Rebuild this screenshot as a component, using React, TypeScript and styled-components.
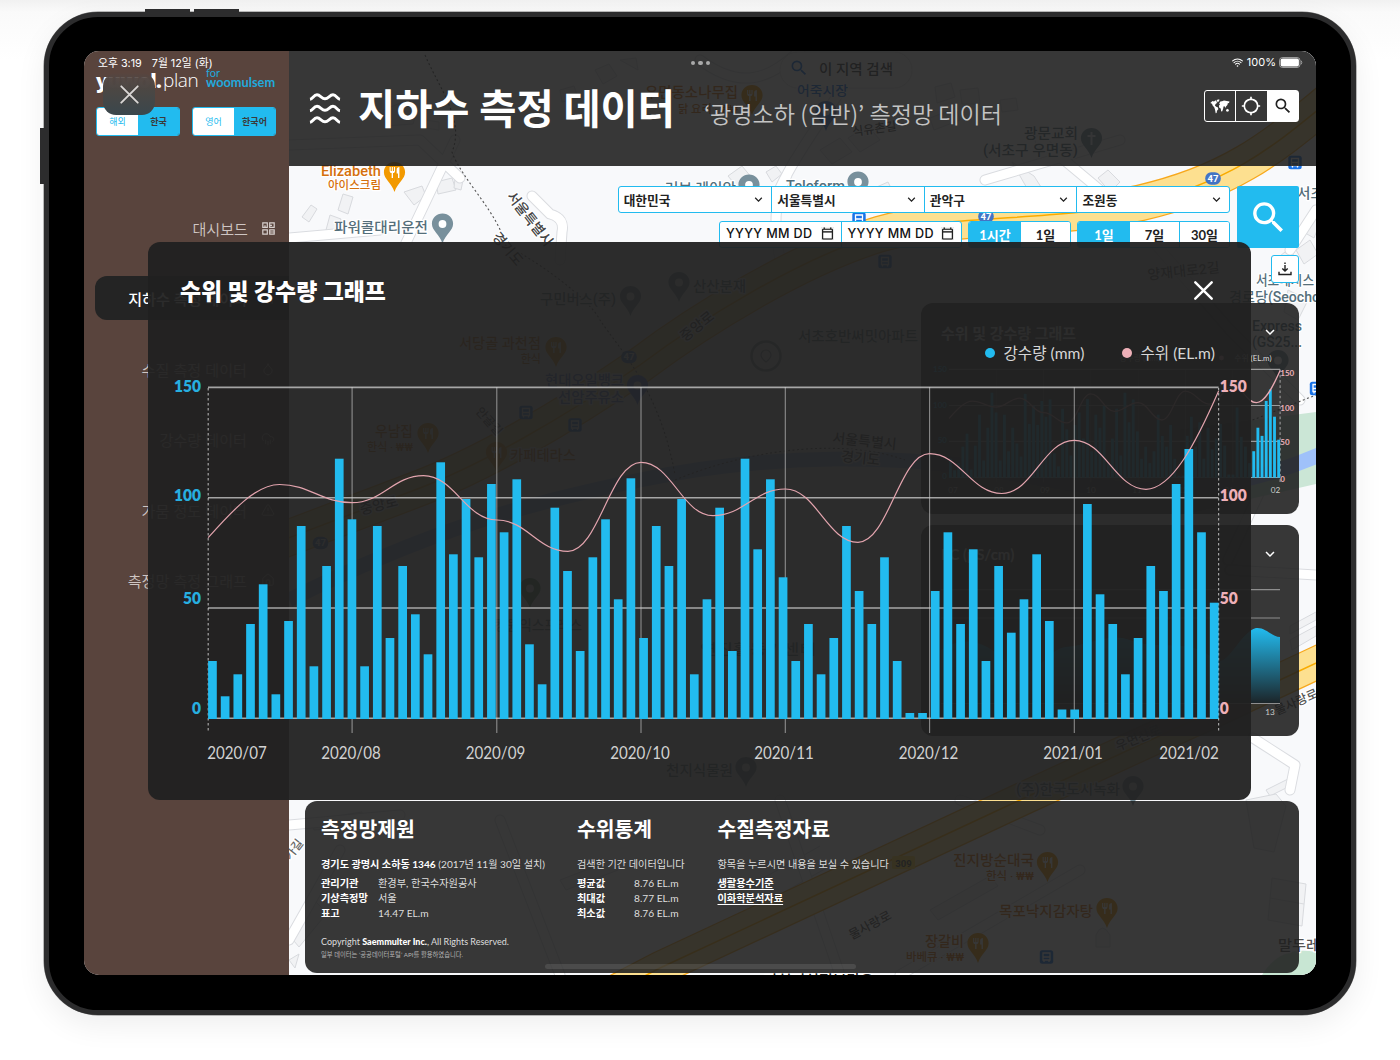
import React from "react";
import styled, { createGlobalStyle, css } from "styled-components";
import {
  MdSearch,
  MdLocationSearching,
  MdOutlineCalendarToday,
  MdKeyboardArrowDown,
  MdRestaurant,
} from "react-icons/md";
import { IoWifi } from "react-icons/io5";
import { Droplet, CloudRain, TriangleAlert, House, ChartNoAxesColumn } from "lucide-react";

const BLUE = "#22bbef";
const PINK = "#eeb0b8";
const TEXT = `"Lato", "Noto Sans CJK KR", sans-serif`;
const MAPFONT = `Roboto, "Noto Sans CJK KR", sans-serif`;
const GLASS = "rgba(30, 30, 30, 0.89)";

const Global = createGlobalStyle`
  *, *::before, *::after { box-sizing: border-box; }
  body { margin: 0; background: #fff; font-family: ${TEXT}; overflow: hidden; }
`;

/* ---------- device ---------- */

const Page = styled.div`
  width: 1400px;
  height: 1060px;
  padding: 12px 0 0 44px;
  background: linear-gradient(#f1f1f1, #fafafa 12px, #ffffff 60px);
`;

const Device = styled.div`
  position: relative;
  width: 1312px;
  height: 1003px;
  padding: 34px 35px;
  background: #000;
  border: 5px solid #2c2c2d;
  border-radius: 54px;
  box-shadow: 0 0 0 0.5px #777, 0 10px 30px rgba(0, 0, 0, 0.07);
`;

const SideKey = styled.div<{ $x: number; $y: number; $w: number; $h: number }>`
  position: absolute;
  left: ${(p) => p.$x}px;
  top: ${(p) => p.$y}px;
  width: ${(p) => p.$w}px;
  height: ${(p) => p.$h}px;
  background: #2c2c2d;
`;

const Screen = styled.div`
  position: relative;
  display: flex;
  width: 1232px;
  height: 924px;
  overflow: hidden;
  border-radius: 15px;
  background: #f8f9fb;
`;

/* ---------- status bar ---------- */

const StatusBar = styled.div`
  position: absolute;
  z-index: 5;
  inset: 0 0 auto 0;
  height: 23px;
  padding: 0 13px 0 14px;
  display: flex;
  align-items: center;
  justify-content: space-between;
  color: #fff;
  font: 400 11px/23px Inter, "Noto Sans CJK KR", sans-serif;
`;

const StatusLeft = styled.div`
  display: flex;
  gap: 10px;
  font-size: 10.8px;
  padding-top: 1px;
`;

const StatusRight = styled.div`
  display: flex;
  align-items: center;
  gap: 3px;
  svg { display: block; }
`;

const Dots = styled.div`
  position: absolute;
  z-index: 5;
  left: 607px;
  top: 10px;
  display: flex;
  gap: 3px;
  i { width: 4.4px; height: 4.4px; border-radius: 50%; background: #a9a9a9; }
`;

const CloseBubble = styled.button`
  position: absolute;
  z-index: 4;
  left: 19px;
  top: 22px;
  width: 52px;
  height: 42px;
  display: grid;
  place-items: center;
  padding: 0;
  border: 0;
  border-radius: 13px;
  background: linear-gradient(rgba(86, 70, 65, 0.2), rgba(82, 70, 66, 0.98) 5px, #4a4744 45%, #3a474d);
`;

const HomeBar = styled.div`
  position: absolute;
  z-index: 4;
  left: 461px;
  top: 913px;
  width: 311px;
  height: 5px;
  border-radius: 3px;
  background: rgba(255, 255, 255, 0.1);
`;

/* ---------- sidebar ---------- */

const Sidebar = styled.aside`
  position: relative;
  width: 205px;
  flex: none;
  padding: 17px 0 0 12px;
  background: #59443d;
`;

const Logo = styled.div`
  display: flex;
  align-items: flex-start;
  height: 39px;
  color: #fff;
  font-family: "Open Sans", sans-serif;
  line-height: 25px;
`;
const LogoBold = styled.span`
  width: 67px;
  font-size: 20px;
  font-weight: 800;
  letter-spacing: -0.6px;
`;
const LogoThin = styled.span`
  width: 43px;
  font-size: 19px;
  font-weight: 300;
  letter-spacing: -0.4px;
`;
const LogoTag = styled.span`
  display: flex;
  flex-direction: column;
  color: #22a9dc;
  font: 700 12.8px/11px Lato, sans-serif;
  small { font-size: 11px; font-weight: 400; line-height: 9px; }
`;

const ToggleRow = styled.div`
  display: flex;
  gap: 12px;
`;

const Toggle = styled.div`
  display: flex;
  width: 84px;
  height: 29px;
  border: 1.5px solid ${BLUE};
  border-radius: 3px;
  overflow: hidden;
`;

const ToggleItem = styled.span<{ $on?: boolean }>`
  flex: 1;
  text-align: center;
  font-size: 9px;
  line-height: 27px;
  ${(p) =>
    p.$on
      ? css`background: ${BLUE}; color: #3b3a3a; font-weight: 700;`
      : css`background: #fff; color: ${BLUE};`}
`;

const Menu = styled.nav`
  display: flex;
  flex-direction: column;
  gap: 26.4px;
  margin-top: 70px;
`;

const MenuItem = styled.a<{ $active?: boolean }>`
  display: flex;
  align-items: center;
  justify-content: flex-end;
  gap: 14px;
  height: 44px;
  margin-left: -1px;
  padding-right: 14px;
  border-radius: 12px 0 0 12px;
  font-size: 15.1px;
  font-weight: ${(p) => (p.$active ? 500 : 350)};
  color: ${(p) => (p.$active ? "#fff" : "#cfc6c3")};
  background: ${(p) => (p.$active ? "#242424" : "transparent")};
`;

/* ---------- main column ---------- */

const Main = styled.main`
  position: relative;
  flex: 1;
  display: flex;
  flex-direction: column;
  min-width: 0;
`;

const MapLayer = styled.svg`
  position: absolute;
  left: 0;
  top: 0;
  width: 1027px;
  height: 924px;
  font-family: ${MAPFONT};
`;

const Header = styled.header`
  position: relative;
  height: 115px;
  flex: none;
  display: flex;
  align-items: center;
  padding: 0 17px 0 20px;
  background: ${GLASS};
`;

const Title = styled.h1`
  margin: 0 29px 0 17px;
  color: #fff;
  font: 700 40.4px/60px ${TEXT};
  white-space: nowrap;
`;

const Subtitle = styled.div`
  flex: 1;
  margin-top: 8px;
  color: #c4c4c4;
  font: 350 23.1px/32px "Noto Sans CJK KR", sans-serif;
  white-space: nowrap;
`;

const IconGroup = styled.div`
  display: flex;
  width: 95px;
  height: 32px;
  margin-top: -5px;
  border: 1.5px solid #fff;
  border-radius: 3px;
`;

const IconButton = styled.button<{ $on?: boolean }>`
  flex: 1;
  display: grid;
  place-items: center;
  padding: 0;
  border: 0;
  border-right: 1.5px solid #fff;
  background: ${(p) => (p.$on ? "#fff" : "transparent")};
  color: ${(p) => (p.$on ? "#222" : "#fff")};
  &:last-child { border-right: 0; }
`;

const Toolbar = styled.div`
  position: relative;
  display: flex;
  justify-content: flex-end;
  gap: 7px;
  height: 62px;
  margin: 20px 17px 0;
`;

const Filters = styled.div`
  display: flex;
  flex-direction: column;
  align-items: flex-end;
  gap: 7.5px;
`;

const FilterRow = styled.div`
  display: flex;
  gap: 6px;
`;

const Segment = styled.div`
  display: flex;
  height: 27.5px;
  border: 1.3px solid ${BLUE};
  border-radius: 3px;
  overflow: hidden;
  background: #fff;
`;

const Select = styled.div`
  width: 152.6px;
  padding: 0 5px;
  display: flex;
  align-items: center;
  justify-content: space-between;
  color: #222;
  font-size: 12.7px;
  font-weight: 700;
  & + & { border-left: 1.3px solid ${BLUE}; }
`;

const DateField = styled.div`
  width: 120.5px;
  padding: 0 7px 0 6px;
  display: flex;
  align-items: center;
  justify-content: space-between;
  color: #111;
  font: 500 12.6px/26px Inter, sans-serif;
  letter-spacing: 0.35px;
  white-space: nowrap;
  svg { flex: none; stroke: #111; stroke-width: 0.2px; margin-top: -2px; }
  & + & { border-left: 1.3px solid ${BLUE}; }
`;

const Option = styled.div<{ $on?: boolean; $w: number }>`
  width: ${(p) => p.$w}px;
  text-align: center;
  font-size: 13px;
  font-weight: 700;
  line-height: 26px;
  color: ${(p) => (p.$on ? "#fff" : "#222")};
  background: ${(p) => (p.$on ? BLUE : "#fff")};
  & + & + & { border-left: 1.3px solid ${BLUE}; }
`;

const SearchButton = styled.button`
  width: 62px;
  height: 62px;
  display: grid;
  place-items: center;
  padding: 0;
  border: 0;
  border-radius: 2px;
  background: ${BLUE};
  color: #fff;
`;

const DownloadButton = styled.button`
  position: relative;
  align-self: flex-end;
  width: 28px;
  height: 28px;
  margin: 7px 17px 20px 0;
  display: grid;
  place-items: center;
  padding: 0;
  border: 1.3px solid ${BLUE};
  border-radius: 3px;
  background: #fff;
`;

const SideCards = styled.div`
  position: relative;
  align-self: flex-end;
  width: 378px;
  margin-right: 17px;
  display: flex;
  flex-direction: column;
  gap: 11px;
`;

const Card = styled.section`
  height: 211px;
  border-radius: 12px;
  background: ${GLASS};
`;

const CardHead = styled.div`
  display: flex;
  align-items: center;
  justify-content: space-between;
  height: 44px;
  margin-top: 7px;
  padding: 0 20px;
  color: #fff;
  font-size: 15px;
  font-weight: 700;
`;

const CardPlot = styled.svg`
  display: block;
  width: 378px;
  height: 160px;
  font-family: ${TEXT};
`;

const InfoCard = styled.section`
  position: relative;
  height: 172px;
  margin: 65px 17px 0 16px;
  padding: 16px 16px 0;
  border-radius: 12px;
  background: ${GLASS};
  color: #dedede;
  display: grid;
  grid-template-columns: 256px 140.5px auto;
`;

const InfoTitle = styled.h2`
  margin: 0 0 14.5px;
  color: #fff;
  font: 700 20.4px/24px ${TEXT};
`;

const InfoLead = styled.p`
  margin: 0 0 4px;
  font-size: 10.15px;
  line-height: 16px;
  white-space: nowrap;
  b { color: #fff; }
`;

const InfoList = styled.dl`
  margin: 0;
  display: grid;
  grid-template-columns: 57px auto;
  font-size: 10.2px;
  line-height: 15.4px;
  dt { font-weight: 700; color: #fff; }
  dd { margin: 0; white-space: nowrap; }
`;

const InfoLink = styled.a`
  display: block;
  margin-top: 1px;
  color: #fff;
  font-size: 10.2px;
  font-weight: 700;
  line-height: 14.4px;
  text-decoration: underline;
  text-underline-offset: 2px;
`;

const Copyright = styled.p`
  margin: 14px 0 1px;
  font-size: 9px;
  line-height: 12px;
  white-space: nowrap;
  b { color: #fff; font-weight: 900; }
`;

const Footnote = styled.p`
  margin: 0;
  color: #b4b4b4;
  font-size: 6.3px;
  line-height: 11px;
  white-space: nowrap;
`;

/* ---------- modal ---------- */

const Modal = styled.div`
  position: absolute;
  z-index: 3;
  left: 64px;
  top: 191px;
  width: 1103px;
  height: 558px;
  border-radius: 12px;
  background: rgba(33, 33, 33, 0.95);
`;

const ModalHead = styled.div`
  display: flex;
  align-items: center;
  justify-content: space-between;
  height: 36px;
  margin: 31px 38.5px 0 32px;
  color: #fff;
  font: 900 22.9px/36px ${TEXT};
  svg { margin-top: -2px; }
`;

const Legend = styled.div`
  display: flex;
  justify-content: flex-end;
  gap: 38px;
  height: 24px;
  margin: 32px 36px 0 0;
  color: #d6d6d6;
  font-size: 15.6px;
  line-height: 24px;
`;

const LegendItem = styled.span<{ $color: string }>`
  display: flex;
  align-items: center;
  gap: 8px;
  &::before {
    content: "";
    width: 10px;
    height: 10px;
    border-radius: 50%;
    background: ${(p) => p.$color};
  }
`;

const ModalPlot = styled.svg`
  display: block;
  width: 1103px;
  height: 420px;
  margin-top: 4px;
  font-family: ${TEXT};
`;

/* ---------- chart data ---------- */

const barTops = [
  661, 696.3, 674.3, 624, 584.3, 694.3, 621, 526, 666.3, 566, 458.7, 519.3, 666.3, 526, 638, 566,
  614.3, 654.3, 462.3, 554.3, 499, 557.3, 484, 532.3, 479.3, 644.3, 684.3, 507.7, 571, 651, 557.3,
  519.3, 599.3, 478.3, 638, 526, 566, 499, 674.3, 599.3, 507.7, 651, 458.7, 549.3, 479.3, 577.3,
  661, 624, 674.3, 638, 526, 591, 624, 557.3, 661, 713, 713, 591, 532.3, 624, 549.3, 661, 566,
  632.7, 599.3, 554.3, 621, 709.5, 709.5, 504, 594.3, 624, 674.3, 638, 566, 591, 484, 449, 532.3,
  602.7,
];

const levels: [number, number][] = [
  [208.2, 537.7], [279.5, 484.5], [352.1, 502.7], [423.5, 475.6], [496.8, 520], [568, 551.3],
  [641, 462.3], [713, 515.7], [785.3, 489], [858, 542.3], [929.6, 453.7], [1001.8, 493.5],
  [1074.3, 440.3], [1146, 489.3],
];

const levelPath = (() => {
  let d = `M${levels[0]} C232 511 256 484.5 ${levels[1]}`;
  for (let i = 2; i < levels.length; i++) {
    const [x0, y0] = levels[i - 1];
    const [x1, y1] = levels[i];
    const k = (x1 - x0) * 0.42;
    d += ` C${x0 + k} ${y0} ${x1 - k} ${y1} ${x1} ${y1}`;
  }
  return d + " C1172 489 1196 443 1218.6 391";
})();

const gridY = [387.4, 497.8, 608, 718.3];
const gridX = [352.1, 496.8, 641, 785.3, 929.6, 1074.3];

const months: [string, number][] = [
  ["2020/07", 237], ["2020/08", 351], ["2020/09", 495.5], ["2020/10", 640],
  ["2020/11", 784], ["2020/12", 928.5], ["2021/01", 1073], ["2021/02", 1189],
];

const Bars = () => (
  <g fill={BLUE}>
    {barTops.map((y, i) => (
      <rect key={i} x={208.1 + i * 12.68} y={y} width={8.7} height={719 - y} />
    ))}
  </g>
);

const MainChart = () => (
  <ModalPlot viewBox="148 369 1103 420">
    <g stroke="#d0d0d0" strokeOpacity="0.75">
      {gridX.map((x) => (
        <line key={x} x1={x} x2={x} y1={387} y2={733} strokeWidth="1.1" strokeOpacity="0.6" />
      ))}
      {gridY.map((y) => (
        <line key={y} x1={208} x2={1218.6} y1={y} y2={y} strokeWidth="1.6" />
      ))}
      {[208.2, 1218.6].map((x) => (
        <line key={x} x1={x} x2={x} y1={388} y2={733} strokeWidth="1.2" strokeDasharray="2.6 2.4" />
      ))}
    </g>
    <Bars />
    <path d={levelPath} fill="none" stroke="#e3a4ae" strokeWidth="1.2" />
    <g fontSize="16.8" fontWeight="800">
      {["150", "100", "50", "0"].map((t, i) => {
        const y = [392, 500.5, 604, 714.3][i];
        const w = t.length * 9;
        return (
          <React.Fragment key={t}>
            <text x={201} y={y} textAnchor="end" fill="#27afe0" textLength={w} lengthAdjust="spacingAndGlyphs">{t}</text>
            <text x={1219.7} y={y} fill={PINK} textLength={w} lengthAdjust="spacingAndGlyphs">{t}</text>
          </React.Fragment>
        );
      })}
    </g>
    <g fontSize="16.6" fill="#d2d2d2" textAnchor="middle">
      {months.map(([m, x]) => (
        <text key={m} x={x} y={758.5} textLength="59.5" lengthAdjust="spacingAndGlyphs">{m}</text>
      ))}
    </g>
  </ModalPlot>
);

const MiniChart = () => (
  <CardPlot viewBox="921 354 378 160">
    <g fontSize="7.8" fill="#ddd">
      <text x={1271.5} y={361} textAnchor="end">수위 (EL.m)</text>
      <text x={1160} y={361} textAnchor="end">강수량 (mm)</text>
      <circle cx={1221.5} cy={358} r="2.4" fill={PINK} />
    </g>
    <g transform="translate(949 369.4) scale(0.3277 0.3265) translate(-208.2 -387.4)">
      <g stroke="#9a9a9a" strokeWidth="3.4">
        {gridY.map((y) => (
          <line key={y} x1={208} x2={1218.6} y1={y} y2={y} />
        ))}
        {gridX.map((x) => (
          <line key={x} x1={x} x2={x} y1={387} y2={733} strokeOpacity="0.4" />
        ))}
        <line x1={1218.6} x2={1218.6} y1={388} y2={733} strokeDasharray="8 8" />
      </g>
      <Bars />
      <path d={levelPath} fill="none" stroke="#e8a9b2" strokeWidth="4" />
    </g>
    <g fontSize="8" fontWeight="700">
      {["150", "100", "50", "0"].map((t, i) => (
        <React.Fragment key={t}>
          <text x={947} y={[372, 408, 443, 479][i]} textAnchor="end" fill="#27afe0">{t}</text>
          <text x={1280.3} y={[375.5, 411.3, 445.3, 481.5][i]} fill={PINK}>{t}</text>
        </React.Fragment>
      ))}
    </g>
    <g fontSize="8.2" fill="#ccc" textAnchor="middle">
      {["07", "08", "09", "10", "11", "12", "01", "02"].map((t, i) => (
        <text key={t} x={i === 7 ? 1275.5 : 953 + i * 46} y={493}>{t}</text>
      ))}
    </g>
  </CardPlot>
);

const EcChart = () => (
  <CardPlot viewBox="921 576 378 160">
    <defs>
      <linearGradient id="ec" x1="0" y1="0" x2="0" y2="1">
        <stop offset="0" stopColor={BLUE} />
        <stop offset="1" stopColor="#1c2529" />
      </linearGradient>
    </defs>
    <path
      d="M941 650 C965 635 985 640 1010 665 C1030 690 1045 650 1065 647 C1090 645 1110 632 1130 640 C1160 652 1190 636 1215 660 C1228 668 1240 632 1256 628 C1266 627 1272 637 1280 637 V703 H941Z"
      fill="url(#ec)"
    />
    <g stroke="#8e8e8e" strokeWidth="1.1">
      {[589.6, 618, 703.5].map((y) => (
        <line key={y} x1={941} x2={1280} y1={y} y2={y} />
      ))}
    </g>
    <text x={1270} y={715} fontSize="8.2" fill="#ccc" textAnchor="middle">13</text>
  </CardPlot>
);

/* ---------- map ---------- */

type PinProps = { x: number; y: number; color?: string; kind?: "food" | "dot" | "cross" };

const Pin = ({ x, y, color = "#78909c", kind = "dot" }: PinProps) => (
  <g transform={`translate(${x} ${y})`}>
    <path
      d="M0 -11 C6 -11 10.6 -6.6 10.6 -0.8 C10.6 6 3 9.5 0 19 C-3 9.5 -10.6 6 -10.6 -0.8 C-10.6 -6.6 -6 -11 0 -11Z"
      fill={color}
    />
    {kind === "dot" && <circle r="3.9" cy="-0.5" fill="#fff" />}
    {kind === "cross" && <path d="M0 -7V6M-4 -3H4" stroke="#e8eef0" strokeWidth="2" />}
    {kind === "food" && <MdRestaurant x={-6.5} y={-7} size={13} color="#fff" />}
  </g>
);

const Label = ({
  x, y, children, color = "#546e7a", size = 13, end = false, rot = 0, w,
}: {
  x: number; y: number; children: React.ReactNode; color?: string; size?: number; end?: boolean; rot?: number; w?: number;
}) => (
  <text
    x={x}
    y={y}
    fontSize={size}
    fontWeight="500"
    fill={color}
    textAnchor={rot ? "middle" : end ? "end" : "start"}
    transform={rot ? `rotate(${rot} ${x} ${y})` : undefined}
    textLength={w}
    lengthAdjust="spacingAndGlyphs"
    stroke="#fff"
    strokeWidth="2.5"
    strokeLinejoin="round"
    paintOrder="stroke"
  >
    {children}
  </text>
);

const Bus = ({ x, y }: { x: number; y: number }) => (
  <g transform={`translate(${x} ${y})`}>
    <rect x="-6.7" y="-6.7" width="13.4" height="13.4" rx="2.5" fill="#1a73e8" />
    <path d="M-3.5 -4H3.5V3H-3.5ZM-3.5 0H3.5M-2.5 3V5M2.5 3V5" stroke="#fff" strokeWidth="1.3" fill="none" />
  </g>
);

const Shield = ({ x, y }: { x: number; y: number }) => (
  <g>
    <rect x={x - 7.8} y={y - 6.2} width="15.6" height="12.4" rx="6" fill="#4374c4" />
    <text x={x} y={y + 3.4} fontSize="9.5" fontWeight="700" fill="#fff" textAnchor="middle">47</text>
  </g>
);

const ORANGE = "#d5700c";
const AMBER = "#f29900";
const mainRoad =
  "M1340 92 C1280 140 1240 180 1140 203 C1050 222 950 214 880 234 C800 258 700 320 640 365 C560 420 480 465 420 488 L270 545";
const lowRoad = "M1340 652 L1220 708 L1020 800 L660 968 L560 1020";

const whiteRoads = [
  "M289 238 L380 230 M405 245 L455 140 M289 145 L420 140 L460 178",
  "M532 196 L550 214 Q565 218 562 232 L560 260",
  "M795 160 C770 200 775 230 780 260 M860 60 C830 110 790 160 775 200",
  "M1040 140 L1130 215 L1230 330 L1300 400 M1290 250 L1316 210",
  "M1228 560 L1270 470 L1316 455 M1230 570 L1316 575 M1253 738 L1295 765 L1290 790",
  "M289 825 L400 815 M289 940 L340 850 M500 820 L560 975",
  "M700 60 C740 90 770 80 800 50 M985 180 L1120 140",
  "M780 800 L840 975 M1040 830 L960 800 M900 975 L1080 870",
];

const blocks = [
  "M311 205 l6 4 -8 13 -7 -5z", "M343 194 l10 3 -5 17 -10 -4z", "M330 215 l11 4 -6 15 -9 -4z",
  "M404 192 l18 -6 4 10 -12 9z", "M436 182 l16 -4 4 12 -18 4z", "M455 178 l8 2 -2 10 -7 -2z",
  "M383 110 l20 -8 14 8 -4 14 -28 2z", "M425 120 l14 2 0 8 -14 -2z",
  "M728 176 l14 -10 10 12 -14 10z", "M766 172 l10 -6 6 8 -10 8z",
  "M1012 162 l22 14 14 22 -20 -8z", "M1098 178 l10 -8 12 12 -10 10z", "M1110 196 l10 -8 14 16 -10 8z",
  "M1300 230 l12 -20 10 8 -8 20z", "M1296 250 l14 -10 8 14 -14 10z", "M1280 256 l10 -8 6 12 -8 8z",
  "M1288 290 l20 10 -10 20 -14 -8z", "M1266 790 l24 -12 4 6 -24 12z",
  "M935 87 l16 -4 4 14 -18 6z M960 90 l18 -2 2 16 -18 0z", "M1000 100 l16 -2 2 12 -16 2z",
  "M930 118 l26 -10 4 12 -26 10z", "M870 190 l18 -8 6 12 -18 8z", "M1290 626 l26 -14 v8 l-26 14z",
  "M1290 640 l26 -14 v10 l-24 14z", "M1272 878 l34 6 -4 42 -34 -6z M1270 898 l34 6",
  "M1246 800 l30 -6 10 12 -12 46 -20 -4z", "M289 935 l26 -34 12 12 -28 34z",
  "M312 820 l50 -8 0 14 -48 4z", "M560 880 l52 -20 6 10 -52 20z", "M1096 935 q6 -14 14 0 v12 h-14z",
  "M760 880 l60 -34 M770 900 l60 -34 M930 910 l60 -34 8 10 -60 34z", "M289 960 l10 -6 -4 14z",
  "M595 70 l14 -6 8 12 -14 8z M620 60 l16 -2 2 12z M560 90 l14 -4 4 12 -16 4z",
  "M820 150 l20 -12 12 14 -20 12z M848 138 l20 -12 12 14 -20 12z",
];

const CityMap = () => (
  <MapLayer viewBox="289 51 1027 924">
    <rect x="289" y="51" width="1027" height="924" fill="#f8f9fb" />
    <g fill="#f1f2f4" stroke="#d8dade" strokeWidth="1">
      {blocks.map((d) => <path key={d} d={d} />)}
    </g>
    <g fill="none" strokeLinecap="round" strokeLinejoin="round">
      {whiteRoads.map((d) => <path key={d} d={d} stroke="#dadce0" strokeWidth="11" />)}
      {whiteRoads.map((d) => <path key={d} d={d} stroke="#fff" strokeWidth="9" />)}
    </g>
    <path d="M1180 430 L1316 412 V484 L1180 515Z" fill="#cbe6d6" />
    <path d="M1262 975 Q1280 945 1316 952 V975Z" fill="#c8e6d3" />
    <path d="M1330 450 C1240 492 1150 500 1040 478 C900 450 760 455 640 480 C520 505 430 530 289 600" fill="none" stroke="#9fc1fa" strokeWidth="15" />
    <g fill="none">
      <path d={mainRoad} stroke="#f7a81d" strokeWidth="37" />
      <path d={mainRoad} stroke="#fde090" strokeWidth="34.5" />
      <path d={mainRoad} stroke="#f9ab00" strokeWidth="1.5" />
      <path d={lowRoad} stroke="#f7a81d" strokeWidth="34" />
      <path d={lowRoad} stroke="#fde090" strokeWidth="31.5" />
      <path d={lowRoad} stroke="#f9ab00" strokeWidth="1.5" />
      <path d="M425 55 C440 90 465 120 452 152 C462 180 500 215 505 245 C540 262 590 300 600 320 C620 350 660 390 675 475" stroke="#555" strokeWidth="1.1" strokeDasharray="2 2.5" />
      <path d="M675 480 C760 445 850 440 905 460 M1240 425 L1316 395" stroke="#555" strokeWidth="1.1" strokeDasharray="2 2.5" />
    </g>
    <rect x="780" y="52" width="132" height="36" rx="18" fill="#fff" stroke="#e4e4e4" />
    <MdSearch x={789} y={58} size={20} color="#1a73e8" />
    <Label x={819} y={74} color="#3c4043" w={74} size={14}>이 지역 검색</Label>

    <Label x={381} y={175.5} end color={ORANGE} size={14} w={60}>Elizabeth</Label>
    <Label x={381} y={189} end color={ORANGE} size={11} w={53}>아이스크림</Label>
    <Pin x={394.5} y={173} color={AMBER} kind="food" />
    <Label x={334} y={231.5} w={94} size={14}>파워콜대리운전</Label>
    <Pin x={442.5} y={224.5} />
    <Label x={526} y={222} rot={52} color="#444" size={14}>서울특별시</Label>
    <Label x={504} y={252} rot={50} color="#444" size={14}>경기도</Label>
    <Label x={665} y={192.5} w={71} size={14}>러브 레이안</Label>
    <Pin x={749} y={185.5} />
    <Label x={786} y={191} w={59} size={14}>Teleform</Label>
    <Pin x={858} y={182.5} />
    <Shield x={1213} y={178.5} />
    <Shield x={986} y={216.5} />
    <Shield x={629} y={357} />
    <Shield x={320.5} y={543} />
    <Bus x={859} y={219} />
    <Bus x={1295} y={162.5} />
    <Bus x={885} y={261.5} />
    <Bus x={526} y={412.5} />
    <Bus x={575} y={425} />
    <Bus x={1316.5} y={388.5} />
    <Bus x={1046.5} y={957} />

    <Label x={738} y={97} end color={ORANGE} w={93} size={14}>우면동소나무집</Label>
    <Label x={738} y={112.5} end color={ORANGE} size={11} w={60}>닭 요리 · ₩₩</Label>
    <Pin x={752} y={96} color={AMBER} kind="food" />
    <Label x={797} y={95} color="#1a73e8" w={51}>어죽시장</Label>
    <Pin x={826} y={112} color="#4a86e8" />
    <Label x={875} y={133} rot={-8} color="#555" size={12}>식유촌길</Label>
    <Label x={1078} y={138} end w={54} size={14}>광문교회</Label>
    <Label x={1078} y={155} end w={95} size={14}>(서초구 우면동)</Label>
    <Pin x={1091.5} y={139} kind="cross" />
    <Label x={1297} y={198} w={27} size={14}>서초</Label>
    <Label x={1184} y={276} rot={-6} color="#666" size={14}>양재대로2길</Label>
    <Label x={1256} y={284.5} w={58} size={14}>서초네시스</Label>
    <Label x={1229} y={301.5} w={91} size={14}>경로당(Seocho</Label>
    <Label x={1252} y={330.5} w={50} size={14}>Express</Label>
    <Label x={1252} y={346.5} w={50} size={14}>(GS25...</Label>
    <Pin x={1278} y={361} />

    <Label x={798} y={341} w={120} size={14}>서초호반써밋아파트</Label>
    <circle cx="766" cy="356" r="14.5" fill="none" stroke="#8a9aa2" strokeWidth="2.5" />
    <path d="M766 350 a5 5 0 0 1 5 5 q0 3 -5 7 q-5 -4 -5 -7 a5 5 0 0 1 5 -5z" fill="none" stroke="#8a9aa2" strokeWidth="1.2" />
    <Label x={540} y={304} w={76} size={14}>구민버스(주)</Label>
    <Pin x={630.5} y={297} />
    <Label x={693} y={291} w={53} size={14}>산산분재</Label>
    <Pin x={679} y={283} />
    <Label x={700} y={330} rot={-38} color="#444" size={14}>중앙로</Label>
    <Label x={380} y={510} rot={-14} color="#444" size={14}>중앙로</Label>
    <Label x={541} y={348} end color={ORANGE} w={82} size={14}>서당골 과천점</Label>
    <Label x={541} y={363} end color={ORANGE} size={11}>한식</Label>
    <Pin x={556} y={348} color={AMBER} kind="food" />
    <Label x={624} y={385} end color="#4a6fd8" w={79} size={14}>현대오일뱅크</Label>
    <Label x={624} y={402} end color="#4a6fd8" w={66} size={14}>선암주유소</Label>
    <Pin x={637.5} y={386} color="#5b7fe0" />
    <Label x={486} y={424} rot={48} color="#555" size={12}>안골길</Label>
    <Label x={413} y={436} end color={ORANGE} w={38} size={14}>우남집</Label>
    <Label x={413} y={451} end color={ORANGE} size={11}>한식 · ₩₩</Label>
    <Pin x={428} y={434} color={AMBER} kind="food" />
    <Pin x={496.5} y={453} color={AMBER} kind="food" />
    <Label x={510} y={460} color={ORANGE} w={66} size={14}>카페테라스</Label>
    <Label x={864} y={446} rot={6} color="#444" size={14}>서울특별시</Label>
    <Label x={860} y={463} rot={6} color="#444" size={14}>경기도</Label>
    <Pin x={530} y={589} color="#4c8f5a" />
    <Label x={494} y={630} w={88} size={14}>킹원익스프레스</Label>
    <Label x={700} y={654} w={116} size={14}>연진활동기센터</Label>
    <Label x={666} y={775} w={67} size={14}>천지식물원</Label>
    <Pin x={746} y={768} />
    <Label x={1140} y={742} rot={-22} color="#444">우면산로</Label>
    <Label x={1016} y={794} w={104} size={14}>(주)한국도시녹화</Label>
    <Pin x={1133} y={787} />
    <Label x={872} y={929} rot={-28} color="#555" size={12.5}>물사랑로</Label>
    <Label x={1298} y={706} rot={-24} color="#555" size={12.5}>물사랑로</Label>
    <Label x={297} y={852} rot={-52} color="#666" size={12}>가길</Label>
    <rect x="892" y="856" width="23" height="13" rx="1.5" fill="#fcd33b" />
    <text x="903.5" y="866.5" fontSize="9.5" fontWeight="700" fill="#444" textAnchor="middle">309</text>
    <Label x={1034} y={864.5} end color={ORANGE} w={81} size={14}>진지방순대국</Label>
    <Label x={1034} y={879.5} end color={ORANGE} size={11} w={48}>한식 · ₩₩</Label>
    <Pin x={1047.5} y={863} color={AMBER} kind="food" />
    <Label x={1093} y={916} end color={ORANGE} w={94} size={14}>목포낙지감자탕</Label>
    <Pin x={1107} y={909} color={AMBER} kind="food" />
    <Label x={964} y={945.5} end color={ORANGE} w={39} size={14}>장갈비</Label>
    <Label x={964} y={960.5} end color={ORANGE} size={11} w={58}>바베큐 · ₩₩</Label>
    <Pin x={978} y={944} color={AMBER} kind="food" />
    <Label x={1278} y={949.5} color="#555" w={42} size={14}>말두레</Label>
    <Label x={764} y={984} color="#222" w={110}>과천지식정보타운</Label>
  </MapLayer>
);

/* ---------- icons ---------- */

const WavesIcon = () => (
  <svg width="32" height="32" viewBox="0 0 32 32" fill="none" stroke="#fff" strokeWidth="2.9">
    {[4, 15.5, 27].map((y) => (
      <path
        key={y}
        d={`M1 ${y + 2.3} C3.8 ${y + 1.9} 4.6 ${y - 2.2} 8 ${y - 2.2} S12.6 ${y + 1.8} 16 ${y + 1.8} S20.6 ${y - 2.2} 24 ${y - 2.2} S28.2 ${y + 1.9} 31 ${y + 2.3}`}
      />
    ))}
  </svg>
);

const WorldIcon = () => (
  <svg width="20" height="15" viewBox="0 0 20 15" fill="#fff">
    <path d="M0.3 4 L2.5 2 L4 2.6 L5.5 1.2 L6.5 2.3 L7 4 L5.6 5 L4.9 6.5 L6.2 7.7 L8 8.6 L8.3 10.3 L7 11.7 L6.6 14 L5.7 14.2 L5 10.5 L4.2 8.3 L2.6 6.5 L2 4.7Z" />
    <path d="M6.5 1 L9.3 0.3 L9.2 1.8 L7.8 3.4Z" />
    <path d="M9.2 4.5 L10.3 2.6 L12 2.2 L14 1.5 L19.5 2.5 L19 4 L17.8 4.2 L17.4 6 L16 7.5 L15.4 9 L14.6 7.2 L13.5 7.6 L13.2 9.5 L12.3 12.3 L11.2 12.4 L10.7 9.5 L9.1 8.6 L9 6.5 L10 5.4Z" />
    <path d="M16 10.8 L18 9.8 L19 11.5 L18 12.7 L16.2 12.3Z" />
  </svg>
);

const DownloadIcon = () => (
  <svg width="14" height="14" viewBox="0 0 14 14" fill="none" stroke="#222" strokeWidth="1.4">
    <path d="M7 0.5V2M7 3V8.8M4.3 6.4L7 9.1L9.7 6.4M1 9.8V12.5H13V9.8" />
  </svg>
);

const DashIcon = () => (
  <svg width="13" height="13" viewBox="0 0 13 13" fill="none" stroke="#d8d0cd" strokeWidth="1.2">
    <path d="M0.8 0.8H5.3V5.3H0.8ZM7.7 0.8H12.2V5.3H7.7ZM7.7 7.8H12.2V12.2H7.7ZM0.8 7.8H5.3V12.2H0.8ZM7.7 3.4H10M3 5.3V3.2M7.7 10H12.2" />
  </svg>
);

const CloseIcon = ({ size, width, color }: { size: number; width: number; color: string }) => (
  <svg width={size} height={size} viewBox={`0 0 ${size} ${size}`} stroke={color} strokeWidth={width} strokeLinecap="round">
    <path d={`M1.3 1.3L${size - 1.3} ${size - 1.3}M${size - 1.3} 1.3L1.3 ${size - 1.3}`} />
  </svg>
);

const BatteryIcon = () => (
  <svg width="24" height="11" viewBox="0 0 24 11">
    <rect x="0.5" y="0.5" width="20.5" height="10" rx="3" fill="none" stroke="#fff" strokeOpacity="0.5" />
    <rect x="1.6" y="1.6" width="18.3" height="7.8" rx="1.9" fill="#fff" />
    <path d="M22.2 3.7Q23.4 5.5 22.2 7.3" stroke="#fff" strokeOpacity="0.5" fill="none" />
  </svg>
);

const menu = [
  { label: "대시보드", icon: <DashIcon /> },
  { label: "지하수 측정 데이터", icon: <ChartNoAxesColumn size={14} strokeWidth={1.3} />, active: true },
  { label: "수질 측정 데이터", icon: <Droplet size={14} strokeWidth={1.3} /> },
  { label: "강수량 데이터", icon: <CloudRain size={14} strokeWidth={1.3} /> },
  { label: "가뭄 정도 데이터", icon: <TriangleAlert size={14} strokeWidth={1.3} /> },
  { label: "측정망 측정 그래프", icon: <House size={14} strokeWidth={1.3} /> },
];

export default function App() {
  return (
    <>
      <Global />
      <Page>
        <Device>
          <SideKey $x={96} $y={-8} $w={45} $h={3} />
          <SideKey $x={145} $y={-8} $w={45} $h={3} />
          <SideKey $x={-9} $y={111} $w={4} $h={56} />
          <Screen>
            <Sidebar>
              <Logo>
                <LogoBold>yuwol.</LogoBold>
                <LogoThin>plan</LogoThin>
                <LogoTag><small>for</small>woomulsem</LogoTag>
              </Logo>
              <ToggleRow>
                <Toggle><ToggleItem>해외</ToggleItem><ToggleItem $on>한국</ToggleItem></Toggle>
                <Toggle><ToggleItem>영어</ToggleItem><ToggleItem $on>한국어</ToggleItem></Toggle>
              </ToggleRow>
              <Menu>
                {menu.map((m) => (
                  <MenuItem key={m.label} $active={m.active}>{m.label}{m.icon}</MenuItem>
                ))}
              </Menu>
            </Sidebar>

            <Main>
              <CityMap />
              <Header>
                <WavesIcon />
                <Title>지하수 측정 데이터</Title>
                <Subtitle>‘광명소하 (암반)’ 측정망 데이터</Subtitle>
                <IconGroup>
                  <IconButton><WorldIcon /></IconButton>
                  <IconButton><MdLocationSearching size={20} /></IconButton>
                  <IconButton $on><MdSearch size={20} /></IconButton>
                </IconGroup>
              </Header>

              <Toolbar>
                <Filters>
                  <Segment>
                    {["대한민국", "서울특별시", "관악구", "조원동"].map((t) => (
                      <Select key={t}>{t}<MdKeyboardArrowDown size={15} /></Select>
                    ))}
                  </Segment>
                  <FilterRow>
                    <Segment>
                      <DateField>YYYY MM DD<MdOutlineCalendarToday size={13} /></DateField>
                      <DateField>YYYY MM DD<MdOutlineCalendarToday size={13} /></DateField>
                    </Segment>
                    <Segment>
                      <Option $on $w={52}>1시간</Option>
                      <Option $w={49}>1일</Option>
                    </Segment>
                    <Segment>
                      <Option $on $w={52}>1일</Option>
                      <Option $w={49}>7일</Option>
                      <Option $w={50}>30일</Option>
                    </Segment>
                  </FilterRow>
                </Filters>
                <SearchButton><MdSearch size={41} /></SearchButton>
              </Toolbar>
              <DownloadButton><DownloadIcon /></DownloadButton>

              <SideCards>
                <Card>
                  <CardHead>수위 및 강수량 그래프<MdKeyboardArrowDown size={18} /></CardHead>
                  <MiniChart />
                </Card>
                <Card>
                  <CardHead>EC (μS/cm)<MdKeyboardArrowDown size={18} /></CardHead>
                  <EcChart />
                </Card>
              </SideCards>

              <InfoCard>
                <div>
                  <InfoTitle>측정망제원</InfoTitle>
                  <InfoLead><b>경기도 광명시 소하동 1346</b> (2017년 11월 30일 설치)</InfoLead>
                  <InfoList>
                    <dt>관리기관</dt><dd>환경부, 한국수자원공사</dd>
                    <dt>기상측정망</dt><dd>서울</dd>
                    <dt>표고</dt><dd>14.47 EL.m</dd>
                  </InfoList>
                  <Copyright>Copyright <b>Saemmulter Inc.</b>, All Rights Reserved.</Copyright>
                  <Footnote>일부 데이터는 ‘공공데이터포털’ API를 활용하였습니다.</Footnote>
                </div>
                <div>
                  <InfoTitle>수위통계</InfoTitle>
                  <InfoLead>검색한 기간 데이터입니다</InfoLead>
                  <InfoList>
                    <dt>평균값</dt><dd>8.76 EL.m</dd>
                    <dt>최대값</dt><dd>8.77 EL.m</dd>
                    <dt>최소값</dt><dd>8.76 EL.m</dd>
                  </InfoList>
                </div>
                <div>
                  <InfoTitle>수질측정자료</InfoTitle>
                  <InfoLead>항목을 누르시면 내용을 보실 수 있습니다</InfoLead>
                  <InfoLink>생활용수기준</InfoLink>
                  <InfoLink>이화학분석자료</InfoLink>
                </div>
              </InfoCard>
            </Main>

            <Modal>
              <ModalHead>
                수위 및 강수량 그래프
                <CloseIcon size={19} width={2.4} color="#fff" />
              </ModalHead>
              <Legend>
                <LegendItem $color={BLUE}>강수량 (mm)</LegendItem>
                <LegendItem $color={PINK}>수위 (EL.m)</LegendItem>
              </Legend>
              <MainChart />
            </Modal>

            <StatusBar>
              <StatusLeft><span>오후 3:19</span><span>7월 12일 (화)</span></StatusLeft>
              <StatusRight><IoWifi size={13} />100%<BatteryIcon /></StatusRight>
            </StatusBar>
            <Dots><i /><i /><i /></Dots>
            <CloseBubble><CloseIcon size={19} width={1.9} color="#d9d6d4" /></CloseBubble>
            <HomeBar />
          </Screen>
        </Device>
      </Page>
    </>
  );
}
